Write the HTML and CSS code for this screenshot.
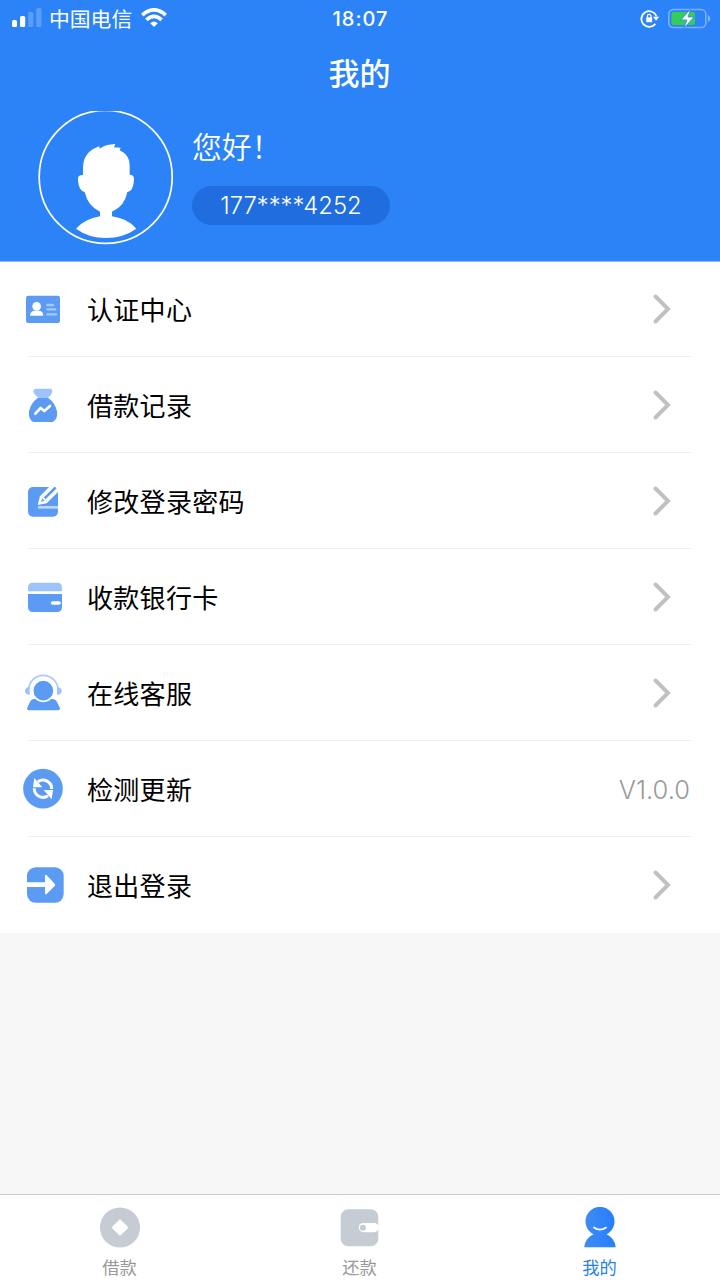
FILE: index.html
```
<!DOCTYPE html>
<html lang="zh-CN">
<head>
<meta charset="utf-8">
<title>我的</title>
<link rel="stylesheet" href="styles.css">
</head>
<body>
<div class="app">
  <header class="header">
    <div class="status">
      <div class="status-left">
        <svg class="signal" width="30" height="20" viewBox="0 0 30 20" fill="#fff">
          <rect x="0" y="12" width="5" height="7" rx="1.6"/>
          <rect x="8" y="8" width="5.2" height="11" rx="1.6"/>
          <rect x="16.2" y="4" width="5.2" height="15" rx="1.6" opacity=".22"/>
          <rect x="24.2" y="0" width="5.2" height="19" rx="1.6" opacity=".22"/>
        </svg>
        <span class="carrier">中国电信</span>
        <svg class="wifi" width="26" height="20" viewBox="0 0 26 20" fill="none" stroke="#fff" stroke-width="3.7">
          <path d="M1.3 7.1Q13-3.3 24.7 7.1"/>
          <path d="M5.4 11.8Q13 5 20.6 11.8"/>
          <path d="M9.2 15.2Q13 11.6 16.8 15.2L13 19Z" fill="#fff" stroke="none"/>
        </svg>
      </div>
      <span class="clock">18:07</span>
      <div class="status-right">
        <svg width="20" height="20" viewBox="0 0 20 20" fill="none" stroke="#fff" stroke-width="1.8">
          <path d="M15.4 14.8A7.8 7.8 0 1 1 16.6 7.5"/>
          <path d="M13 7.7h6.2l-3.1 4z" fill="#fff" stroke="none"/>
          <rect x="6.2" y="8.3" width="6" height="5" rx=".6" fill="#fff" stroke="none"/>
          <path d="M7.4 8.7V7.1a1.8 1.8 0 0 1 3.6 0v1.6" stroke-width="1.2"/>
        </svg>
        <svg class="battery" width="43" height="22" viewBox="0 0 43 22">
          <rect x=".8" y="1.5" width="37" height="18" rx="4.5" fill="none" stroke="#7db1fb" stroke-width="1.5"/>
          <path d="M39.8 7q2.6 1 2.6 3.5t-2.6 3.5z" fill="#7db1fb"/>
          <rect x="3.4" y="4.1" width="23.6" height="12.8" rx="2" fill="#35cc58"/>
          <path d="M22.4 1 13 11.9h5.8L16.2 20 26 9h-5.9z" fill="#fff" stroke="#2b83f7" stroke-width=".8"/>
        </svg>
      </div>
    </div>
    <h1 class="title">我的</h1>
    <div class="profile">
      <svg class="avatar" width="136" height="134" viewBox="0 0 136 134">
        <circle cx="67.7" cy="65.9" r="66.5" fill="none" stroke="#fff" stroke-width="1.7"/>
        <path transform="translate(-18 -11) scale(.33333)" fill="#fff" d="M189 225V202Q190 155 238 139L239 146Q256 133 286 132L282 142L302 143L299 151Q329 165 329 195V224Q343 224 342 239Q340 274 322 276Q315 318 276 335V349Q325 356 349 386Q310 414 258 414T168 386Q195 356 240 349V335Q204 319 194 276Q176 273 174 239Q172 224 189 225Z"/>
      </svg>
      <div class="identity">
        <div class="hello">您好！</div>
        <div class="phone">177****4252</div>
      </div>
    </div>
  </header>

  <main class="menu">
    <div class="row">
      <svg class="icon" viewBox="0 0 144 144">
        <rect x="18" y="32" width="102" height="82" rx="7" fill="#5b9bf3"/>
        <circle cx="50" cy="64" r="13" fill="#fff"/>
        <path d="M30 92Q31 77 45 77H56Q69 77 70 92Z" fill="#fff"/>
        <path d="M82 60H99M82 73H106M82 88H108" stroke="#a5cafa" stroke-width="7" stroke-linecap="round"/>
      </svg>
      <span class="label">认证中心</span>
      <svg class="chevron" viewBox="0 0 20 32"><path d="M3.5 3.5 16 16 3.5 28.5"/></svg>
    </div>
    <div class="row">
      <svg class="icon" viewBox="0 0 144 144">
        <path d="M48 23H90Q98 24 97 32Q93 45 81 50H57Q43 43 40 32Q40 24 48 23Z" fill="#9cc4fb"/>
        <path d="M54 50H84Q106 66 111 91Q114 116 98 123H41Q24 117 27 91Q32 66 54 50Z" fill="#5b9bf3"/>
        <path d="M46 98 62 81 73 90 90 75" fill="none" stroke="#fff" stroke-width="8" stroke-linecap="round" stroke-linejoin="round"/>
      </svg>
      <span class="label">借款记录</span>
      <svg class="chevron" viewBox="0 0 20 32"><path d="M3.5 3.5 16 16 3.5 28.5"/></svg>
    </div>
    <div class="row">
      <svg class="icon" viewBox="0 0 144 144">
        <rect x="24" y="30" width="90" height="89" rx="15" fill="#5b9bf3"/>
        <path d="M53 84 60 58 88 29H114V45L80 79Z" fill="#fff"/>
        <path d="M74 64 107 31" stroke="#5b9bf3" stroke-width="8"/>
        <path d="M63 74 67 64 74 71Z" fill="#5b9bf3"/>
        <path d="M54 91H114" stroke="#bcd7fb" stroke-width="8"/>
      </svg>
      <span class="label">修改登录密码</span>
      <svg class="chevron" viewBox="0 0 20 32"><path d="M3.5 3.5 16 16 3.5 28.5"/></svg>
    </div>
    <div class="row">
      <svg class="icon" viewBox="0 0 144 144">
        <path d="M24 55V44Q24 29 39 29H111Q126 29 126 44V55Z" fill="#9cc4fb"/>
        <path d="M24 63H126V102Q126 117 111 117H39Q24 117 24 102Z" fill="#5b9bf3"/>
        <path d="M98 90H117" stroke="#fff" stroke-width="11" stroke-linecap="round"/>
      </svg>
      <span class="label">收款银行卡</span>
      <svg class="chevron" viewBox="0 0 20 32"><path d="M3.5 3.5 16 16 3.5 28.5"/></svg>
    </div>
    <div class="row">
      <svg class="icon" viewBox="0 0 144 144">
        <path d="M26 63A44 44 0 0 1 114 63" fill="none" stroke="#a9ccfa" stroke-width="5"/>
        <path d="M29 53Q15 55 15 66T29 78ZM111 53Q125 55 125 66T111 78Z" fill="#9cc4fb"/>
        <path d="M41 90H99Q108 91 113 103L120 118Q121 124 114 124H27Q20 124 21 118L28 103Q33 91 41 90Z" fill="#5b9bf3"/>
        <circle cx="70" cy="65" r="32" fill="#5b9bf3" stroke="#fff" stroke-width="5"/>
      </svg>
      <span class="label">在线客服</span>
      <svg class="chevron" viewBox="0 0 20 32"><path d="M3.5 3.5 16 16 3.5 28.5"/></svg>
    </div>
    <div class="row">
      <svg class="icon" viewBox="0 0 144 144">
        <circle cx="69" cy="71" r="59.5" fill="#5b9bf3"/>
        <path d="M54 50A26 26 0 0 1 95 72M84 92A26 26 0 0 1 43 70" fill="none" stroke="#fff" stroke-width="9"/>
        <path d="M43 39 39 67H67ZM95 103 99 75H71Z" fill="#fff"/>
      </svg>
      <span class="label">检测更新</span>
      <span class="version">V1.0.0</span>
    </div>
    <div class="row">
      <svg class="icon" viewBox="0 0 144 144">
        <rect x="21" y="19" width="110" height="106" rx="26" fill="#5b9bf3"/>
        <path d="M21 64H75V43Q77 40 80 43L104 68Q107 71 104 75L80 99Q77 102 75 98V78H21Z" fill="#fff"/>
      </svg>
      <span class="label">退出登录</span>
      <svg class="chevron" viewBox="0 0 20 32"><path d="M3.5 3.5 16 16 3.5 28.5"/></svg>
    </div>
  </main>

  <nav class="tabs">
    <div class="tab">
      <svg width="42" height="42" viewBox="0 0 42 42">
        <circle cx="21" cy="20.5" r="20" fill="#c5ccd3"/>
        <rect x="15" y="14.5" width="12" height="12" rx="1.6" transform="rotate(45 21 20.5)" fill="#fff"/>
      </svg>
      <span>借款</span>
    </div>
    <div class="tab">
      <svg width="42" height="42" viewBox="0 0 42 42">
        <rect x="1.7" y="2.2" width="37.6" height="37" rx="7.5" fill="#c5ccd3"/>
        <rect x="19.7" y="16" width="20" height="9.2" rx="4.6" fill="#fff"/>
        <circle cx="23.9" cy="20.7" r="3" fill="#c5ccd3"/>
      </svg>
      <span>还款</span>
    </div>
    <div class="tab active">
      <svg width="42" height="42" viewBox="0 0 42 42">
        <defs><linearGradient id="me" x1="0" y1="0" x2="1" y2="0"><stop offset="0" stop-color="#3f8cf2"/><stop offset="1" stop-color="#267eff"/></linearGradient></defs>
        <path d="M14.5 27.3A14.5 14.5 0 1 1 27.5 27.3Q35.8 31 36.7 40.3H5.2Q6 31 14.5 27.3Z" fill="url(#me)"/>
        <path d="M15 20.6Q21 24.8 27 20.6" fill="none" stroke="#fff" stroke-width="1.8" stroke-linecap="round"/>
      </svg>
      <span>我的</span>
    </div>
  </nav>
</div>
</body>
</html>
```
FILE: styles.css
```
* { box-sizing: border-box; }
body {
  margin: 0;
  font-family: Inter, "Noto Sans CJK SC", sans-serif;
  color: #000;
}
svg { display: block; flex: none; }
.app {
  display: flex;
  flex-direction: column;
  width: 720px;
  height: 1280px;
  background: #f7f7f7;
}
.header {
  height: 262px;
  border-bottom: 1px solid #8dbbfb;
  background: #2b83f7;
  color: #fff;
}
.status {
  display: grid;
  grid-template-columns: 1fr auto 1fr;
  align-items: center;
  height: 37px;
  padding: 0 9px 0 12px;
}
.status-left, .status-right { display: flex; align-items: center; }
.status-right { justify-content: flex-end; gap: 8px; }
.battery { margin-top: -1px; }
.signal { margin-top: -2px; }
.carrier {
  margin-left: 7px;
  padding-top: 1px;
  font-size: 20.8px;
  line-height: 37px;
}
.wifi { margin-left: 9px; margin-top: -2px; }
.clock {
  margin-left: -2px;
  font-size: 20px;
  font-weight: 500;
  letter-spacing: 1px;
}
.title {
  margin: 0;
  height: 74px;
  padding-right: 1px;
  font-size: 31px;
  font-weight: 500;
  line-height: 74px;
  text-align: center;
}
.profile {
  display: flex;
  gap: 18px;
  padding-left: 38px;
}
.identity { padding-top: 13px; }
.hello {
  height: 62px;
  font-size: 29.8px;
  line-height: 47px;
  font-weight: 350;
}
.phone {
  width: 198px;
  height: 39px;
  border-radius: 20px;
  background: #206de0;
  font-size: 23.8px;
  font-weight: 350;
  line-height: 39px;
  text-align: center;
}
.menu { background: #fff; height: 672px; margin-top: -1px; padding-top: 1px; background-clip: content-box; }
.row {
  position: relative;
  display: flex;
  align-items: center;
  height: 96px;
  padding: 0 30px 0 20px;
}
.row:not(:last-child)::after {
  content: "";
  position: absolute;
  left: 28px;
  right: 29px;
  bottom: 0;
  height: 1px;
  background: #efefef;
}
.row:first-child { height: 95px; padding-bottom: 1px; }
.icon { width: 48px; height: 48px; }
.label {
  flex: 1;
  margin-left: 19px;
  padding-bottom: 2px;
  font-size: 26px;
  letter-spacing: .3px;
}
.chevron {
  width: 20px;
  height: 32px;
  margin-right: 18px;
  fill: none;
  stroke: #c1c1c1;
  stroke-width: 4;
  stroke-linecap: round;
}
.version { color: #999; font-size: 25.5px; font-weight: 350; }
.tabs {
  display: grid;
  grid-template-columns: repeat(3, 1fr);
  height: 86px;
  margin-top: auto;
  border-top: 1px solid #c9c9c9;
  background: #fff;
}
.tab {
  display: flex;
  flex-direction: column;
  align-items: center;
  padding-top: 12px;
  color: #999;
  font-size: 17.3px;
  line-height: 37px;
}
.tab span { margin-right: 1px; }
.active { color: #2b7fe9; }
```
